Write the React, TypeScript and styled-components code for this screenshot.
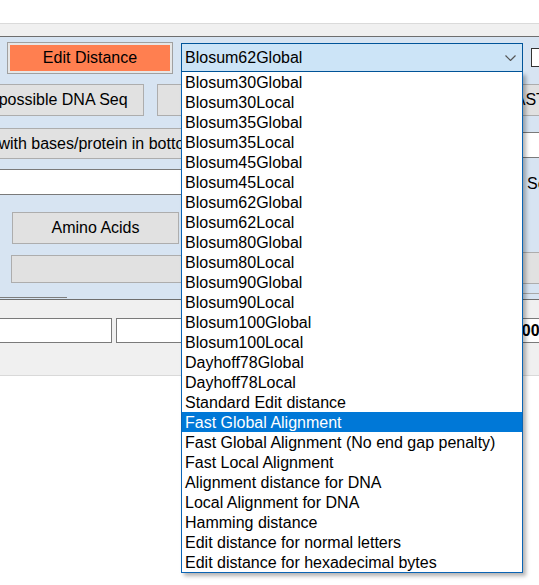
import React from 'react'
import styled, {createGlobalStyle} from 'styled-components'

const GlobalStyle = createGlobalStyle`
  html, body {
    margin: 0;
    padding: 0;
    background: #fff;
  }
  * {
    box-sizing: border-box;
  }
  body {
    font-family: "Liberation Sans", Arial, sans-serif;
    font-size: 16px;
    color: #000;
  }
`;

const Page = styled.div`
  position: relative;
  width: 539px;
  height: 585px;
  overflow: hidden;
  background: #fff;
`;

const TopGap = styled.div`
  height: 23px;
`;

const Strip = styled.div`
  height: 14px;
  background: #f0f0f0;
  border-top: 1px solid #dadada;
  border-bottom: 1px solid #6e6e6e;
`;

const Panel = styled.div`
  height: 263px;
  background: #d7e4f2;
  border-bottom: 1px solid #6e6e6e;
  display: flex;
  flex-direction: column;
`;

const Row = styled.div<{ $mt: number; $h: number }>`
  display: flex;
  align-items: flex-start;
  flex-shrink: 0;
  margin-top: ${p => p.$mt}px;
  height: ${p => p.$h}px;
`;

const Button = styled.button<{ $w: number; $h?: number; $ml?: number; $mt?: number }>`
  flex-shrink: 0;
  width: ${p => p.$w}px;
  height: ${p => p.$h ?? 32}px;
  margin: ${p => p.$mt ?? 0}px 0 0 ${p => p.$ml ?? 0}px;
  padding: 0;
  background: #e1e1e1;
  border: 1px solid #adadad;
  font: inherit;
  color: #000;
  display: flex;
  align-items: center;
  justify-content: center;
  white-space: nowrap;
  overflow: hidden;
`;

const CoralButton = styled(Button)`
  background: #ff7f50;
  border-color: #a0a0a0;
  box-shadow: inset 0 0 0 2px #e6e6e6;
`;

const ComboWrap = styled.div`
  position: relative;
  flex-shrink: 0;
  width: 342px;
  height: 29px;
  margin: 1px 0 0 8px;
  z-index: 10;
`;

const ComboBox = styled.div`
  height: 100%;
  display: flex;
  align-items: center;
  padding: 0 6px 0 3px;
  background: #cce4f7;
  border: 1px solid #005499;
  white-space: nowrap;
`;

const ComboText = styled.span`
  flex: 1;
`;

const List = styled.div`
  position: absolute;
  top: 100%;
  left: 0;
  width: 342px;
  background: #fff;
  border: 1px solid #0a64b4;
  border-top: none;
  box-shadow: 3px 3px 4px rgba(0, 0, 0, 0.3);
`;

const Item = styled.div<{ $selected?: boolean }>`
  height: 20px;
  line-height: 21px;
  padding-left: 3px;
  white-space: nowrap;
  background: ${p => (p.$selected ? '#0078d7' : 'transparent')};
  color: ${p => (p.$selected ? '#fff' : '#000')};
`;

const CheckBox = styled.div`
  flex-shrink: 0;
  width: 19px;
  height: 19px;
  margin: 6px 0 0 8px;
  background: #fff;
  border: 1px solid #333;
`;

const TextBox = styled.div<{ $w: number; $h?: number; $ml?: number; $mt?: number; $bold?: boolean }>`
  flex-shrink: 0;
  width: ${p => p.$w}px;
  height: ${p => p.$h ?? 26}px;
  margin: ${p => p.$mt ?? 0}px 0 0 ${p => p.$ml ?? 0}px;
  padding-left: 3px;
  background: #fff;
  border: 1px solid #7a7a7a;
  display: flex;
  align-items: center;
  font-weight: ${p => (p.$bold ? 'bold' : 'normal')};
  white-space: nowrap;
`;

const Label = styled.span<{ $ml: number }>`
  flex-shrink: 0;
  margin: 2px 0 0 ${p => p.$ml}px;
  line-height: 26px;
  white-space: nowrap;
`;

const EdgeLine = styled.div<{ $w: number; $ml?: number; $mt?: number; $color: string }>`
  flex-shrink: 0;
  width: ${p => p.$w}px;
  height: 1px;
  margin: ${p => p.$mt ?? 0}px 0 0 ${p => p.$ml ?? 0}px;
  background: ${p => p.$color};
`;

const Footer = styled.div`
  height: 76px;
  background: #f0f0f0;
  border-bottom: 1px solid #d9d9d9;
  display: flex;
  flex-direction: column;
`;

const options = [
    'Blosum30Global', 'Blosum30Local', 'Blosum35Global', 'Blosum35Local',
    'Blosum45Global', 'Blosum45Local', 'Blosum62Global', 'Blosum62Local',
    'Blosum80Global', 'Blosum80Local', 'Blosum90Global', 'Blosum90Local',
    'Blosum100Global', 'Blosum100Local', 'Dayhoff78Global', 'Dayhoff78Local',
    'Standard Edit distance', 'Fast Global Alignment',
    'Fast Global Alignment (No end gap penalty)', 'Fast Local Alignment',
    'Alignment distance for DNA', 'Local Alignment for DNA', 'Hamming distance',
    'Edit distance for normal letters', 'Edit distance for hexadecimal bytes',
];

const Chevron = () => (
    <svg width="11" height="6" viewBox="0 0 11 6">
        <path d="M0.5 0.5 L5.5 5.5 L10.5 0.5" fill="none" stroke="#555" strokeWidth="1.2"/>
    </svg>
);

export default function App() {
    const selected = 'Fast Global Alignment';

    return (
        <Page>
            <GlobalStyle/>
            <TopGap/>
            <Strip/>
            <Panel>
                <Row $mt={5} $h={32}>
                    <CoralButton $w={166} $ml={7}>Edit Distance</CoralButton>
                    <ComboWrap>
                        <ComboBox>
                            <ComboText>Blosum62Global</ComboText>
                            <Chevron/>
                        </ComboBox>
                        <List>
                            {options.map(o => (
                                <Item key={o} $selected={o === selected}>{o}</Item>
                            ))}
                        </List>
                    </ComboWrap>
                    <CheckBox/>
                </Row>
                <Row $mt={10} $h={32}>
                    <Button $w={184} $ml={-40}>All possible DNA Seq</Button>
                    <Button $w={268} $ml={13}>Translate</Button>
                    <Button $w={171} $ml={10}>BLAST</Button>
                </Row>
                <Row $mt={12} $h={31}>
                    <Button $w={282} $h={31} $ml={-63}>Align with bases/protein in bottom</Button>
                    <TextBox $w={140} $ml={221} $mt={4}/>
                </Row>
                <Row $mt={10} $h={26}>
                    <TextBox $w={490} $ml={-10}/>
                    <Label $ml={47}>Search</Label>
                </Row>
                <Row $mt={17} $h={32}>
                    <Button $w={167} $ml={12}>Amino Acids</Button>
                </Row>
                <Row $mt={8} $h={32}>
                    <Button $w={390} $h={28} $ml={11} $mt={3}/>
                    <Button $w={180} $ml={20}/>
                </Row>
                <Row $mt={9} $h={5}>
                    <EdgeLine $w={67} $mt={4} $color="#7d7d7d"/>
                    <EdgeLine $w={120} $ml={400} $color="#a8a8a8"/>
                </Row>
            </Panel>
            <Footer>
                <Row $mt={18} $h={25}>
                    <TextBox $w={132} $h={25} $ml={-20}/>
                    <TextBox $w={375} $h={25} $ml={4}/>
                    <TextBox $w={100} $h={25} $ml={9} $bold>1000</TextBox>
                </Row>
            </Footer>
        </Page>
    )
}
